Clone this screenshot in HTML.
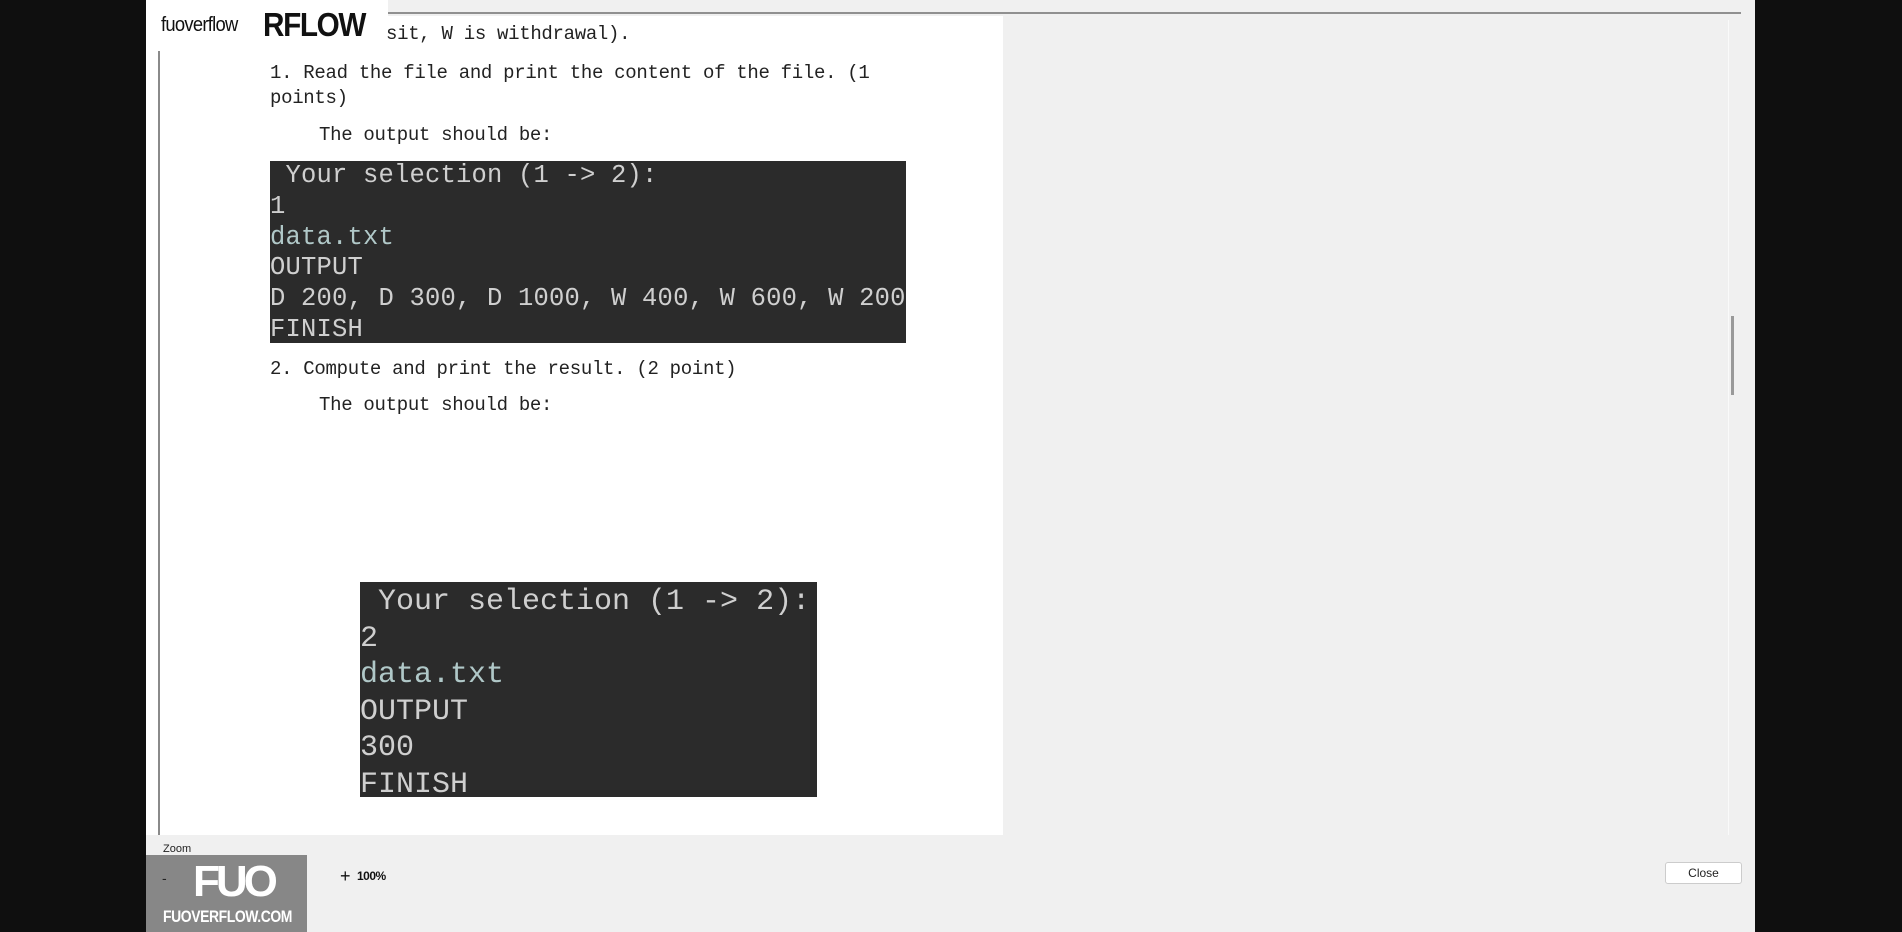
<!DOCTYPE html>
<html><head><style>
*{margin:0;padding:0;box-sizing:border-box}
body{width:1902px;height:932px;background:#0f0f0f;position:relative;overflow:hidden;font-family:"Liberation Sans",sans-serif}
.a{position:absolute}
.mono{font-family:"Liberation Mono",monospace;color:#222;font-size:19px;white-space:pre;letter-spacing:-0.3px}
.term{background:#2b2b2b;font-family:"Liberation Mono",monospace;color:#cfcfcf;white-space:pre;overflow:hidden}
</style></head><body>
<div class="a" style="left:146px;top:0;width:1609px;height:932px;background:#f0f0f0"></div>
<div class="a" style="left:388px;top:12px;width:1353px;height:2px;background:#909090"></div>
<div class="a" style="left:146px;top:16px;width:857px;height:819px;background:#fff"></div>
<div class="a" style="left:158px;top:40px;width:2px;height:795px;background:#8a8a8a"></div>
<div class="a" style="left:1731px;top:316px;width:3px;height:79px;background:#999"></div>
<div class="a" style="left:1728px;top:20px;width:1px;height:815px;background:#fafafa"></div>

<div class="a" style="left:146px;top:0;width:242px;height:51px;background:#fff"></div>
<div class="a" style="left:161px;top:14px;font-size:20px;color:#111;letter-spacing:-0.8px;transform:scaleX(0.92);transform-origin:left">fuoverflow</div>
<div class="a" style="left:263px;top:6px;font-size:33px;font-weight:bold;color:#111;letter-spacing:-1.5px;transform:scaleX(0.9);transform-origin:left">RFLOW</div>

<div class="a mono" style="left:386px;top:23px">sit, W is withdrawal).</div>
<div class="a mono" style="left:270px;top:61px;line-height:25px">1. Read the file and print the content of the file. (1
points)</div>
<div class="a mono" style="left:319px;top:124px">The output should be:</div>

<div class="a term" style="left:270px;top:161px;width:636px;height:182px;font-size:25.5px;line-height:30.8px"><div style="margin-top:0px;letter-spacing:0.2px"> Your selection (1 -&gt; 2):
1
<span style="color:#b0c8c8">data.txt</span>
OUTPUT
D 200, D 300, D 1000, W 400, W 600, W 200
FINISH</div></div>

<div class="a mono" style="left:270px;top:358px">2. Compute and print the result. (2 point)</div>
<div class="a mono" style="left:319px;top:394px">The output should be:</div>

<div class="a term" style="left:360px;top:582px;width:457px;height:215px;font-size:30px;line-height:36.6px"><div style="margin-top:2px"> Your selection (1 -&gt; 2):
2
<span style="color:#b0c8c8">data.txt</span>
OUTPUT
300
FINISH</div></div>

<div class="a" style="left:163px;top:843px;font-size:11px;color:#222">Zoom</div>
<div class="a" style="left:340px;top:866px;font-size:18px;color:#111">+</div>
<div class="a" style="left:357px;top:869px;font-size:12px;font-weight:bold;color:#111;letter-spacing:-0.5px">100%</div>
<div class="a" style="left:1665px;top:862px;width:77px;height:22px;background:#fff;border:1px solid #ccc;border-radius:3px;font-size:12px;color:#222;text-align:center;line-height:20px">Close</div>

<div class="a" style="left:146px;top:855px;width:161px;height:77px;background:#878787"></div>
<div class="a" style="left:162px;top:870px;font-size:14px;color:#222">-</div>
<div class="a" style="left:193px;top:857px;font-size:44px;font-weight:bold;color:#fff;letter-spacing:-4px">FUO</div>
<div class="a" style="left:163px;top:907px;font-size:17px;font-weight:bold;color:#fff;letter-spacing:-0.5px;transform:scaleX(0.82);transform-origin:left">FUOVERFLOW.COM</div>
</body></html>
